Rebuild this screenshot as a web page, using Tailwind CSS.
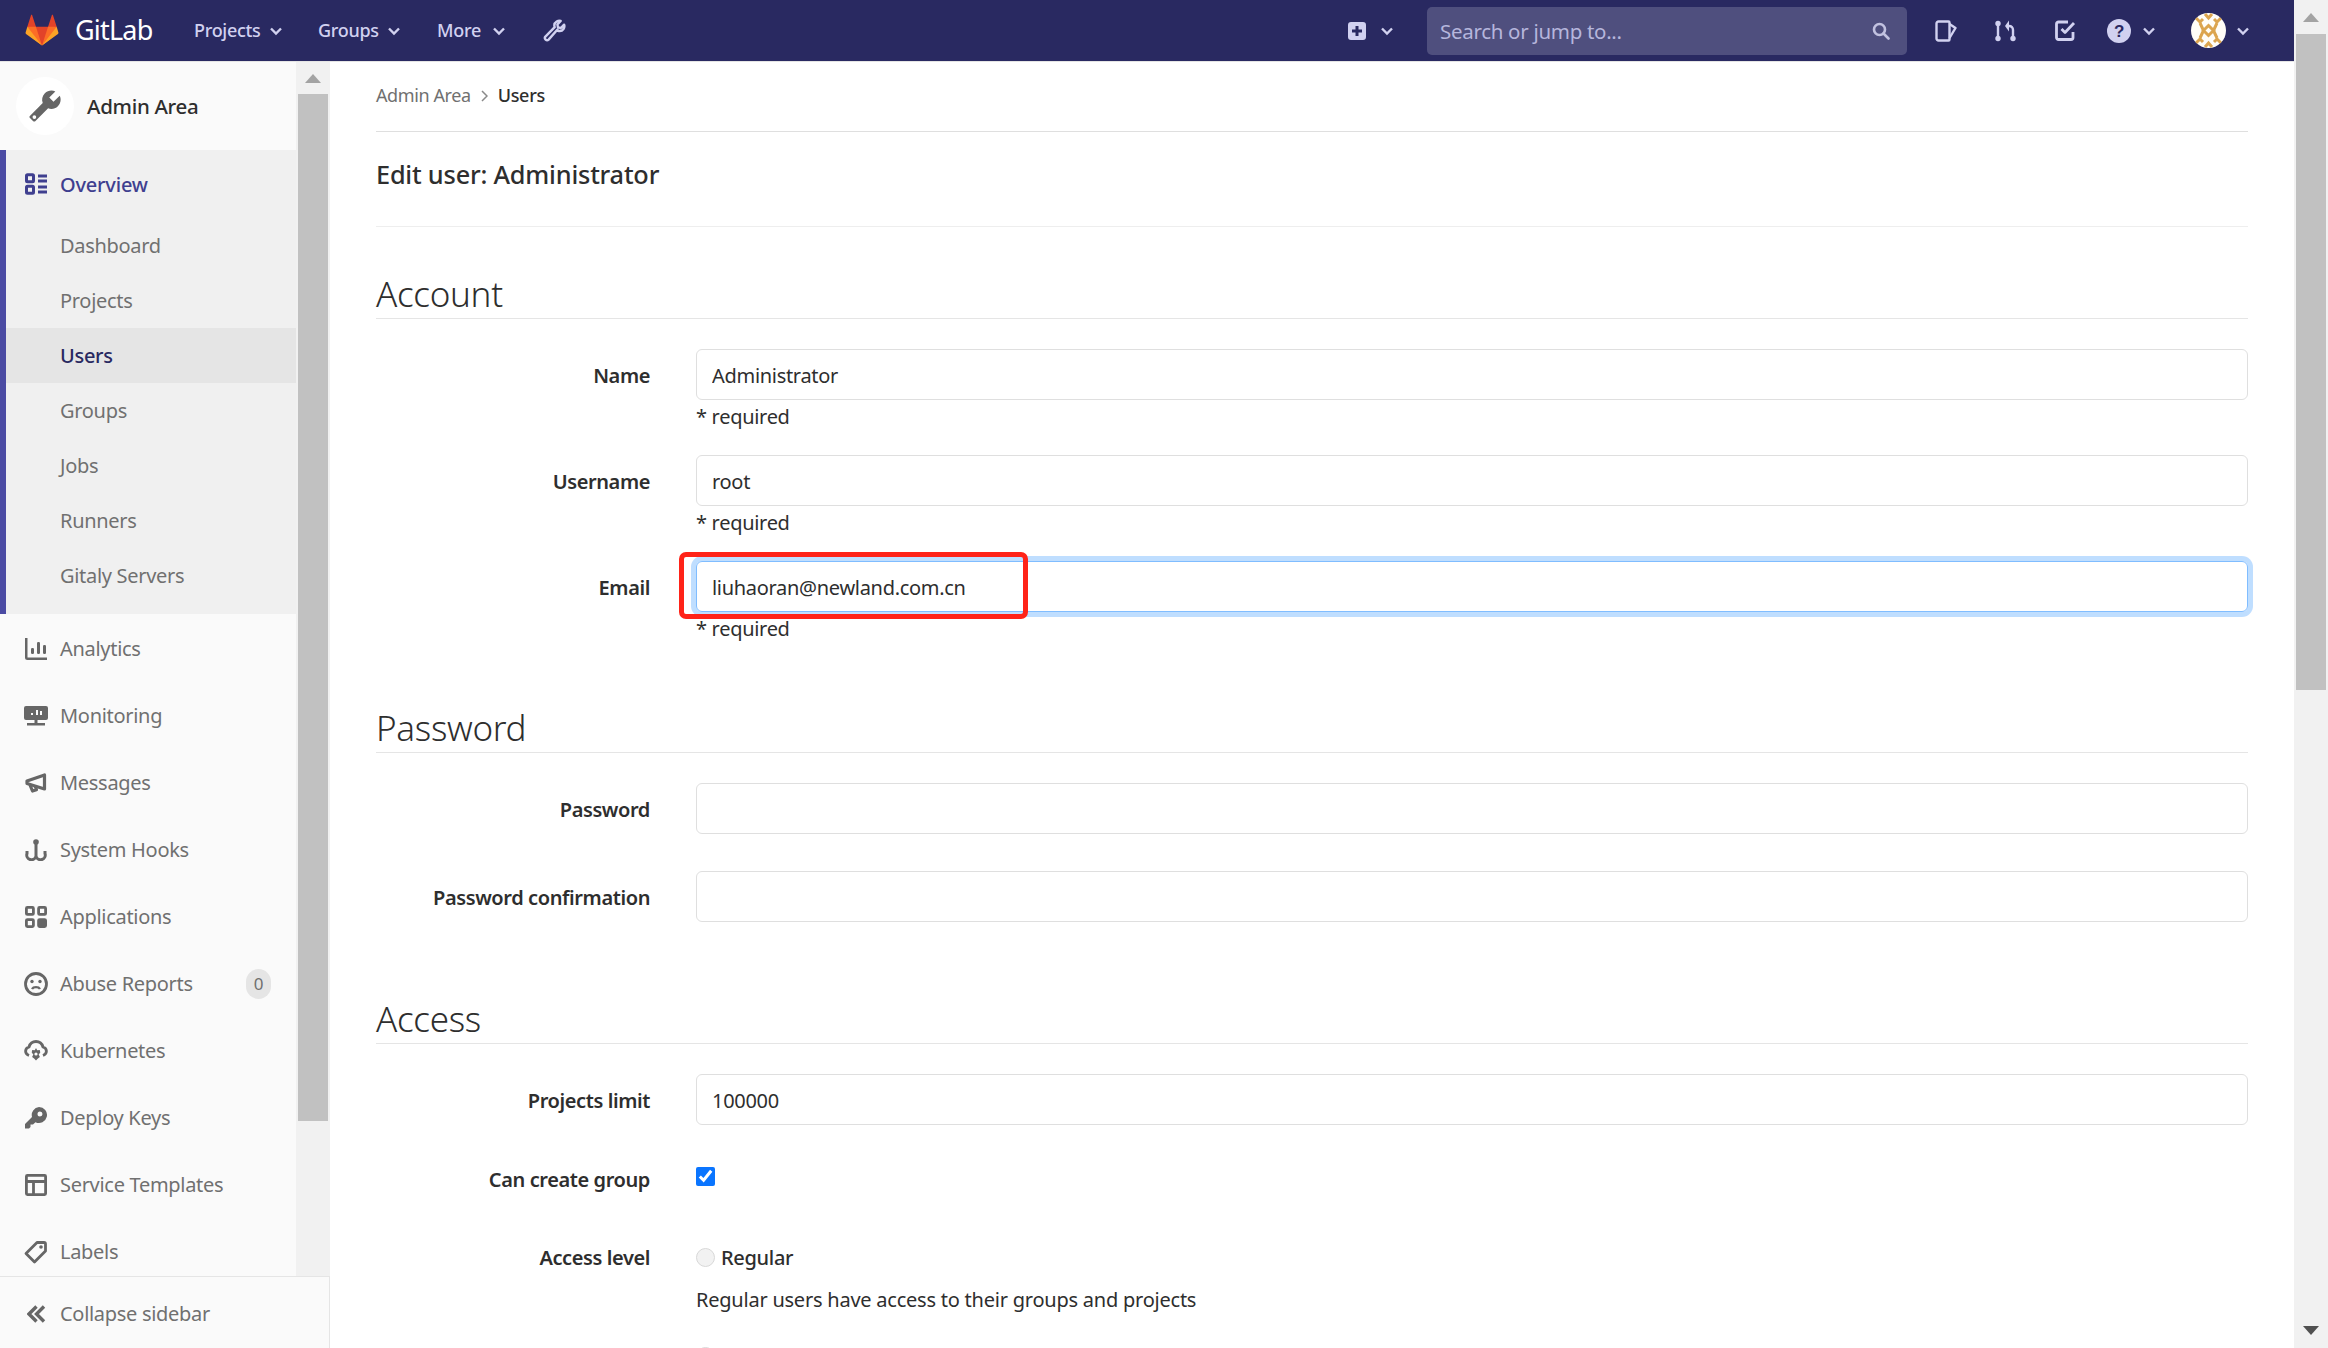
<!DOCTYPE html>
<html lang="en">
<head>
<meta charset="UTF-8">
<title>Edit user: Administrator</title>
<script src="https://cdn.jsdelivr.net/npm/@tailwindcss/browser@4"></script>
</head>
<body class="h-screen overflow-hidden bg-white font-['Noto_Sans',sans-serif] text-[#2e2e2e] text-[20px] tracking-[-0.3px]">
<div class="flex h-[1348px]">
  <div class="flex-1 min-w-0 flex flex-col">

    <!-- top navbar -->
    <header class="h-[62px] shrink-0 flex items-center bg-[#292961] border-b border-[#e5e5e5] text-[#d1d1f0]">
      <div class="w-[24px]"></div>
      <svg class="w-[36px] h-[33px]" viewBox="0 0 36 36">
        <path fill="#e24329" d="M2 14l9.38 9v-9l-4.09-12.59c-.2-.62-1.08-.62-1.29 0z"/>
        <path fill="#e24329" d="M34 14l-9.38 9v-9l4.09-12.59c.2-.62 1.08-.62 1.29 0z"/>
        <path fill="#e24329" d="M18 34.38 3 14h30z"/>
        <path fill="#fc6d26" d="M18 34.38 11.38 14H2l4 11z"/>
        <path fill="#fc6d26" d="M18 34.38 24.62 14H34l-4 11z"/>
        <path fill="#fca326" d="M2 14L.1 20.16c-.18.565 0 1.2.5 1.56l17.42 12.66z"/>
        <path fill="#fca326" d="M34 14l1.9 6.16c.18.565 0 1.2-.5 1.56L18 34.38z"/>
      </svg>
      <span class="ml-[15px] w-[119px] text-white text-[27px] tracking-[-0.8px]">GitLab</span>
      <span class="text-[18px] font-medium w-[64px]">Projects</span>
      <svg class="ml-[12px] w-[12px] h-[12px]" viewBox="0 0 12 12" fill="none" stroke="#d1d1f0" stroke-width="2.4"><path d="M1 3.5l5 5 5-5"/></svg>
      <span class="ml-[36px] text-[18px] font-medium w-[59px]">Groups</span>
      <svg class="ml-[11px] w-[12px] h-[12px]" viewBox="0 0 12 12" fill="none" stroke="#d1d1f0" stroke-width="2.4"><path d="M1 3.5l5 5 5-5"/></svg>
      <span class="ml-[37px] text-[18px] font-medium w-[43px]">More</span>
      <svg class="ml-[13px] w-[12px] h-[12px]" viewBox="0 0 12 12" fill="none" stroke="#d1d1f0" stroke-width="2.4"><path d="M1 3.5l5 5 5-5"/></svg>
      <svg class="ml-[38px] w-[24px] h-[24px]" viewBox="0 0 24 24" fill="none" stroke="#d1d1f0" stroke-width="2.4" stroke-linejoin="round"><path d="M14.5 10.5 5.6 20.6a2.2 2.2 0 0 1-3.2-3l9.3-9.4c-.8-2.300.2-4.600 2-5.700 1.300-.8 2.800-1 4-.6l-3.300 3.600.6 2.900 2.900.6 3.200-3.300c.5 1.400.3 3-.6 4.300-1.300 1.900-3.600 2.500-6 1.600z"/></svg>

      <svg class="ml-[781px] w-[18px] h-[18px]" viewBox="0 0 18 18"><path fill="#d1d1f0" fill-rule="evenodd" d="M3 0h12a3 3 0 0 1 3 3v12a3 3 0 0 1-3 3H3a3 3 0 0 1-3-3V3a3 3 0 0 1 3-3zm4.500 4v3.500H4v3h3.500V14h3v-3.500H14v-3h-3.500V4z"/></svg>
      <svg class="ml-[15px] w-[12px] h-[12px]" viewBox="0 0 12 12" fill="none" stroke="#d1d1f0" stroke-width="2.4"><path d="M1 3.500l5 5 5-5"/></svg>
      <div class="ml-[34px] w-[480px] h-[48px] flex items-center rounded-[5px] bg-[#4f4f7e] pl-[13px] pr-[17px]">
        <span class="flex-1 text-[#b6b6dc] text-[20.500px] pt-[1px]">Search or jump to...</span>
        <svg class="w-[18px] h-[18px]" viewBox="0 0 18 18" fill="none" stroke="#c2c2e0" stroke-width="2.600"><circle cx="7.500" cy="7.500" r="5.500"/><path d="M11.500 11.500l5 5" stroke-linecap="round"/></svg>
      </div>
      <svg class="ml-[28px] w-[22px] h-[22px]" viewBox="0 0 22 22" fill="none" stroke="#d1d1f0" stroke-width="2.400" stroke-linejoin="round"><path d="M3.500 1.500h10a1 1 0 0 1 1 1V19.500a1 1 0 0 1-1 1h-10a2 2 0 0 1-2-2v-15a2 2 0 0 1 2-2z"/><path d="M14.500 4l6 4-6 10"/></svg>
      <svg class="ml-[37px] w-[23px] h-[22px]" viewBox="0 0 23 22"><g fill="#d1d1f0"><circle cx="4" cy="3.500" r="2.700"/><circle cx="4" cy="18.500" r="2.700"/><circle cx="19" cy="18.500" r="2.700"/><path d="M11 6l4-5.500v11z"/></g><path d="M4 3v15M19 18v-8c0-2.500-1.500-4-4-4h-1" fill="none" stroke="#d1d1f0" stroke-width="2.400"/></svg>
      <svg class="ml-[38px] w-[21px] h-[21px]" viewBox="0 0 21 21" fill="none" stroke="#d1d1f0" stroke-width="2.800" stroke-linejoin="round"><path d="M18 12v5.500a2 2 0 0 1-2 2H3.500a2 2 0 0 1-2-2V4a2 2 0 0 1 2-2H13"/><path d="M6.500 9l3.500 3.500L19 3"/></svg>
      <svg class="ml-[31px] w-[24px] h-[24px]" viewBox="0 0 24 24"><circle cx="12" cy="12" r="12" fill="#d1d1f0"/><text x="12" y="18" text-anchor="middle" font-family="Liberation Sans" font-weight="700" font-size="17" fill="#292961">?</text></svg>
      <svg class="ml-[12px] w-[12px] h-[12px]" viewBox="0 0 12 12" fill="none" stroke="#d1d1f0" stroke-width="2.400"><path d="M1 3.500l5 5 5-5"/></svg>
      <svg class="ml-[36px] w-[35px] h-[35px]" viewBox="0 0 35 35">
        <clipPath id="av"><circle cx="17.500" cy="17.500" r="17.500"/></clipPath>
        <g clip-path="url(#av)">
          <rect width="35" height="35" fill="#fffdf8"/>
          <g fill="none" stroke="#dca54f" stroke-width="3">
            <path d="M17.500 12.500l5 5-5 5-5-5z"/>
            <path d="M3 3l6 6 3-3M32 3l-6 6-3-3M3 32l6-6 3 3M32 32l-6-6-3 3"/>
            <path d="M9 10l3.500 7.500L9 25M26 10l-3.500 7.500L26 25"/>
            <path d="M14 1l3.500 4 3.500-4M14 34l3.500-4 3.500 4"/>
          </g>
        </g>
      </svg>
      <svg class="ml-[11px] w-[12px] h-[12px]" viewBox="0 0 12 12" fill="none" stroke="#d1d1f0" stroke-width="2.400"><path d="M1 3.500l5 5 5-5"/></svg>
    </header>

    <div class="flex-1 min-h-0 flex">
      <!-- sidebar -->
      <aside class="w-[330px] shrink-0 flex flex-col">
        <div class="flex-1 min-h-0 flex">
          <nav class="w-[296px] shrink-0 overflow-hidden bg-[#fafafa] text-[#707070]">
            <div class="h-[88px] flex items-center pl-[16px]">
              <div class="w-[58px] h-[58px] rounded-full bg-white flex items-center justify-center">
                <svg class="w-[34px] h-[34px]" viewBox="0 0 24 24" fill="#666"><path transform="matrix(-1 0 0 1 24 0)" fill-rule="evenodd" d="M22.700 19l-9.100-9.100c.9-2.300.4-5-1.500-6.900-2-2-5-2.400-7.400-1.300L9 6 6 9 1.600 4.700C.4 7.100.9 10.100 2.900 12.100c1.900 1.900 4.600 2.400 6.900 1.500l9.100 9.100c.4.4 1 .4 1.400 0l2.300-2.300c.5-.4.5-1.100.1-1.400zM19.500 18.500a1.300 1.300 0 1 1 0 2.600 1.300 1.300 0 0 1 0-2.600z"/></svg>
              </div>
              <span class="ml-[13px] text-[#2e2e2e] text-[20.500px] font-medium">Admin Area</span>
            </div>

            <div class="h-[464px] bg-[#f0f0f0] border-l-[6px] border-[#4b4ba3]">
              <div class="h-[68px] flex items-center pl-[19px] text-[#3f3f8f] font-medium">
                <svg class="w-[22px] h-[22px] shrink-0" viewBox="0 0 22 22" fill="none" stroke="#3f3f8f" stroke-width="3"><rect x="1.500" y="1.800" width="7" height="7" rx="1"/><rect x="1.500" y="13.200" width="7" height="7" rx="1"/><path d="M13 3h9M13 8h9M13 14h9M13 19h9"/></svg>
                <span class="ml-[13px] pt-[1px] tracking-[-0.200px]">Overview</span>
              </div>
              <div class="h-[55px] flex items-center pl-[54px]">Dashboard</div>
              <div class="h-[55px] flex items-center pl-[54px]">Projects</div>
              <div class="h-[55px] flex items-center pl-[54px] bg-[#e5e5e5] text-[#292961] font-medium">Users</div>
              <div class="h-[55px] flex items-center pl-[54px]">Groups</div>
              <div class="h-[55px] flex items-center pl-[54px]">Jobs</div>
              <div class="h-[55px] flex items-center pl-[54px]">Runners</div>
              <div class="h-[55px] flex items-center pl-[54px]">Gitaly Servers</div>
            </div>

            <div class="pt-[1px]">
            <div class="h-[67px] flex items-center pl-[25px]">
              <svg class="w-[22px] h-[22px] shrink-0" viewBox="0 0 22 22" fill="#666"><path d="M0 0h2.500v19.500H22V22H2.500A2.500 2.500 0 0 1 0 19.500z"/><rect x="6" y="10" width="3" height="6" rx="1.200"/><rect x="12" y="4" width="3" height="12" rx="1.200"/><rect x="18" y="7" width="3" height="9" rx="1.200"/></svg>
              <span class="ml-[13px]">Analytics</span>
            </div>
            <div class="h-[67px] flex items-center pl-[24px]">
              <svg class="w-[24px] h-[20px] shrink-0" viewBox="0 0 24 20" fill="#666"><path fill-rule="evenodd" d="M2 0h20a2 2 0 0 1 2 2v10a2 2 0 0 1-2 2H2a2 2 0 0 1-2-2V2a2 2 0 0 1 2-2zm5 7v2h2V7zm5-3v5h2V4zm4 1v4h2V5z"/><path d="M10.500 14h3v3h-3zM3 17h18v2.500H3z"/></svg>
              <span class="ml-[12px]">Monitoring</span>
            </div>
            <div class="h-[67px] flex items-center pl-[25px]">
              <svg class="w-[22px] h-[20px] shrink-0" viewBox="0 0 22 20" fill="none" stroke="#666" stroke-width="3.200" stroke-linejoin="round"><path d="M19.500 2v14L2 10.500V8z"/><path d="M5 12l2.500 6 4-1.200-1.500-4"/></svg>
              <span class="ml-[13px]">Messages</span>
            </div>
            <div class="h-[67px] flex items-center pl-[25px]">
              <svg class="w-[22px] h-[22px] shrink-0" viewBox="0 0 22 22" fill="none" stroke="#666" stroke-width="3"><circle cx="11" cy="3" r="2.800" fill="#666" stroke="none"/><path d="M11 5v12M2 12v2.500a4.500 4.500 0 0 0 9 3 4.500 4.500 0 0 0 9-3V12"/></svg>
              <span class="ml-[13px]">System Hooks</span>
            </div>
            <div class="h-[67px] flex items-center pl-[25px]">
              <svg class="w-[22px] h-[22px] shrink-0" viewBox="0 0 22 22" fill="none" stroke="#666" stroke-width="2.800"><rect x="1.400" y="1.400" width="7" height="7" rx="1"/><rect x="13.600" y="1.400" width="7" height="7" rx="1"/><rect x="1.400" y="13.600" width="7" height="7" rx="1"/><rect x="13.600" y="13.600" width="7" height="7" rx="1" fill="#666"/></svg>
              <span class="ml-[13px]">Applications</span>
            </div>
            <div class="h-[67px] flex items-center pl-[24px]">
              <svg class="w-[24px] h-[24px] shrink-0" viewBox="0 0 24 24" fill="none" stroke="#666" stroke-width="2.800"><circle cx="12" cy="12" r="10.500"/><circle cx="8" cy="9.500" r="1.700" fill="#666" stroke="none"/><circle cx="16" cy="9.500" r="1.700" fill="#666" stroke="none"/><path d="M8 17c1.500-2.500 6.500-2.500 8 0" stroke-width="2.400"/></svg>
              <span class="ml-[12px] w-[186px]">Abuse Reports</span>
              <span class="w-[25px] h-[30px] rounded-full bg-[#e5e5e5] flex items-center justify-center text-[17px]">0</span>
            </div>
            <div class="h-[67px] flex items-center pl-[24px]">
              <svg class="w-[24px] h-[22px] shrink-0" viewBox="0 0 24 22" fill="none" stroke="#666" stroke-width="2.800" stroke-linejoin="round"><path d="M5 15.500c-5-2-4-7.500 0-8.500C6 3.500 9 1.500 12 1.500s6 2 7 5.500c4 1 5 6.500 0 8.500"/><path fill="#666" stroke="none" d="M12 8l1.200 2.200 2.600-.3.500 2.600-1.600 2 1.200 2.400-2 1.700-1.900 2-1.900-2-2-1.700 1.200-2.400-1.600-2 .5-2.600 2.600.3z"/><circle cx="12" cy="14" r="1.600" fill="#fafafa" stroke="none"/></svg>
              <span class="ml-[12px]">Kubernetes</span>
            </div>
            <div class="h-[67px] flex items-center pl-[25px]">
              <svg class="w-[22px] h-[22px] shrink-0" viewBox="0 0 22 22" fill="#666"><path fill-rule="evenodd" d="M14 0a8 8 0 1 1-3.500 15.200L8 17.500H5.500V20L4 21.500H0V17l7-7A8 8 0 0 1 14 0zm1 4.500a2.500 2.500 0 1 0 0 5 2.500 2.500 0 0 0 0-5z"/></svg>
              <span class="ml-[13px]">Deploy Keys</span>
            </div>
            <div class="h-[67px] flex items-center pl-[25px]">
              <svg class="w-[22px] h-[22px] shrink-0" viewBox="0 0 22 22" fill="none" stroke="#666" stroke-width="2.800"><rect x="1.400" y="1.400" width="19.200" height="19.200" rx="1"/><path d="M1 7.500h20M8.500 7.500V21"/></svg>
              <span class="ml-[13px]">Service Templates</span>
            </div>
            <div class="h-[67px] flex items-center pl-[24px]">
              <svg class="w-[24px] h-[24px] shrink-0" viewBox="0 0 24 24" fill="none" stroke="#666" stroke-width="2.800" stroke-linejoin="round"><path d="M13 2.500h7a1.500 1.500 0 0 1 1.500 1.500v7L10.500 22 2 13.500z"/><circle cx="17" cy="7" r="1.800" fill="#666" stroke="none"/></svg>
              <span class="ml-[12px]">Labels</span>
            </div>
            </div>
          </nav>
          <!-- sidebar scrollbar -->
          <div class="w-[34px] shrink-0 bg-[#f1f1f1] pl-[2px] pr-[2px]">
            <div class="h-[32px] flex items-center justify-center">
              <svg class="w-[16px] h-[9px]" viewBox="0 0 16 9"><path fill="#a3a3a3" d="M8 0l8 9H0z"/></svg>
            </div>
            <div class="h-[1027px] bg-[#c1c1c1]"></div>
          </div>
        </div>
        <div class="h-[72px] shrink-0 flex items-center pl-[27px] pt-[2px] bg-[#fafafa] border-t border-r border-[#e5e5e5] text-[#707070]">
          <svg class="w-[19px] h-[18px] shrink-0" viewBox="0 0 19 18" fill="none" stroke="#666" stroke-width="3.400"><path d="M9.500 1.500 2 9l7.500 7.500M17 1.500 9.500 9l7.500 7.500"/></svg>
          <span class="ml-[14px]">Collapse sidebar</span>
        </div>
      </aside>

      <!-- main content -->
      <main class="flex-1 min-w-0 px-[46px] overflow-hidden">
        <div class="h-[70px] flex items-center border-b border-[#dfdfdf] text-[18px] pb-[2px]">
          <span class="text-[#707070] tracking-[-0.400px]">Admin Area</span>
          <svg class="mx-[10px] w-[7px] h-[12px]" viewBox="0 0 7 12" fill="none" stroke="#8a8a8a" stroke-width="1.500"><path d="M1 1l5 5-5 5"/></svg>
          <span class="font-medium">Users</span>
        </div>
        <div class="h-[95px] flex items-start pt-[24px] border-b border-[#eeeeee]">
          <h1 class="text-[25.300px] leading-[36px] font-medium tracking-[-0.200px]">Edit user: Administrator</h1>
        </div>

        <h2 class="h-[92px] flex items-end pb-[4px] border-b border-[#e5e5e5] text-[35px] font-light leading-[40px] tracking-[-0.300px]">Account</h2>
        <div class="mt-[30px]">
          <div class="flex h-[106px]">
            <label class="w-[274px] h-[51px] flex items-center justify-end pt-[2px] font-semibold tracking-[-0.400px]">Name</label>
            <div class="ml-[46px] flex-1">
              <input value="Administrator" class="w-full h-[51px] px-[15px] pt-[2px] rounded-[6px] border border-[#dfdfdf] outline-none">
              <p class="mt-[3px] leading-[28px]">* required</p>
            </div>
          </div>
          <div class="flex h-[106px]">
            <label class="w-[274px] h-[51px] flex items-center justify-end pt-[2px] font-semibold tracking-[-0.400px]">Username</label>
            <div class="ml-[46px] flex-1">
              <input value="root" class="w-full h-[51px] px-[15px] pt-[2px] rounded-[6px] border border-[#dfdfdf] outline-none">
              <p class="mt-[3px] leading-[28px]">* required</p>
            </div>
          </div>
          <div class="flex h-[106px]">
            <label class="w-[274px] h-[51px] flex items-center justify-end pt-[2px] font-semibold tracking-[-0.400px]">Email</label>
            <div class="ml-[46px] flex-1 relative">
              <input value="liuhaoran@newland.com.cn" class="w-full h-[51px] px-[15px] pt-[2px] rounded-[6px] border border-[#80bdff] outline-none shadow-[0_0_0_5px_rgba(0,123,255,0.25)]">
              <p class="mt-[3px] leading-[28px]">* required</p>
              <!-- red marker drawn over the field -->
              <div class="absolute left-[-17px] top-[-9px] w-[349px] h-[67px] rounded-[7px] border-[5px] border-[#ff2318]"></div>
            </div>
          </div>
        </div>

        <h2 class="h-[86px] flex items-end pb-[4px] border-b border-[#e5e5e5] text-[35px] font-light leading-[40px] tracking-[-0.300px]">Password</h2>
        <div class="mt-[30px]">
          <div class="flex h-[88px]">
            <label class="w-[274px] h-[51px] flex items-center justify-end pt-[2px] font-semibold tracking-[-0.400px]">Password</label>
            <input type="password" class="ml-[46px] flex-1 h-[51px] px-[15px] rounded-[6px] border border-[#dfdfdf] outline-none">
          </div>
          <div class="flex h-[51px]">
            <label class="w-[274px] h-[51px] flex items-center justify-end pt-[2px] font-semibold tracking-[-0.400px]">Password confirmation</label>
            <input type="password" class="ml-[46px] flex-1 h-[51px] px-[15px] rounded-[6px] border border-[#dfdfdf] outline-none">
          </div>
        </div>

        <h2 class="h-[122px] flex items-end pb-[4px] border-b border-[#e5e5e5] text-[35px] font-light leading-[40px] tracking-[-0.300px]">Access</h2>
        <div class="mt-[30px]">
          <div class="flex h-[93px]">
            <label class="w-[274px] h-[51px] flex items-center justify-end pt-[2px] font-semibold tracking-[-0.400px]">Projects limit</label>
            <input value="100000" class="ml-[46px] flex-1 h-[51px] px-[15px] pt-[2px] rounded-[6px] border border-[#dfdfdf] outline-none">
          </div>
          <div class="flex h-[78px]">
            <label class="w-[274px] h-[24px] flex items-center justify-end pt-[2px] font-semibold tracking-[-0.400px]">Can create group</label>
            <input type="checkbox" checked class="ml-[46px] mt-0 w-[19px] h-[19px] accent-[#0a75ff]">
          </div>
          <div class="flex">
            <label class="w-[274px] h-[24px] flex items-center justify-end pt-[1px] font-semibold tracking-[-0.400px]">Access level</label>
            <div class="ml-[46px] flex-1">
              <div class="flex items-center h-[24px]">
                <span class="w-[19px] h-[19px] rounded-full bg-[#f2f2f2] border border-[#d8d8d8]"></span>
                <span class="ml-[6px] font-medium pt-[1px]">Regular</span>
              </div>
              <p class="mt-[17px] leading-[28px] tracking-[-0.230px]">Regular users have access to their groups and projects</p>
              <div class="mt-[30px] flex items-center h-[24px]">
                <span class="w-[19px] h-[19px] rounded-full bg-[#f2f2f2] border border-[#d8d8d8]"></span>
                <span class="ml-[6px] font-medium">Admin</span>
              </div>
            </div>
          </div>
        </div>
      </main>
    </div>
  </div>

  <!-- window scrollbar -->
  <div class="w-[34px] shrink-0 flex flex-col bg-[#f1f1f1] px-[2px]">
    <div class="h-[34px] flex items-center justify-center">
      <svg class="w-[16px] h-[9px]" viewBox="0 0 16 9"><path fill="#a3a3a3" d="M8 0l8 9H0z"/></svg>
    </div>
    <div class="h-[656px] bg-[#c1c1c1]"></div>
    <div class="flex-1 flex items-end justify-center pb-[13px]">
      <svg class="w-[16px] h-[9px]" viewBox="0 0 16 9"><path fill="#505050" d="M8 9 16 0H0z"/></svg>
    </div>
  </div>
</div>
</body>
</html>
